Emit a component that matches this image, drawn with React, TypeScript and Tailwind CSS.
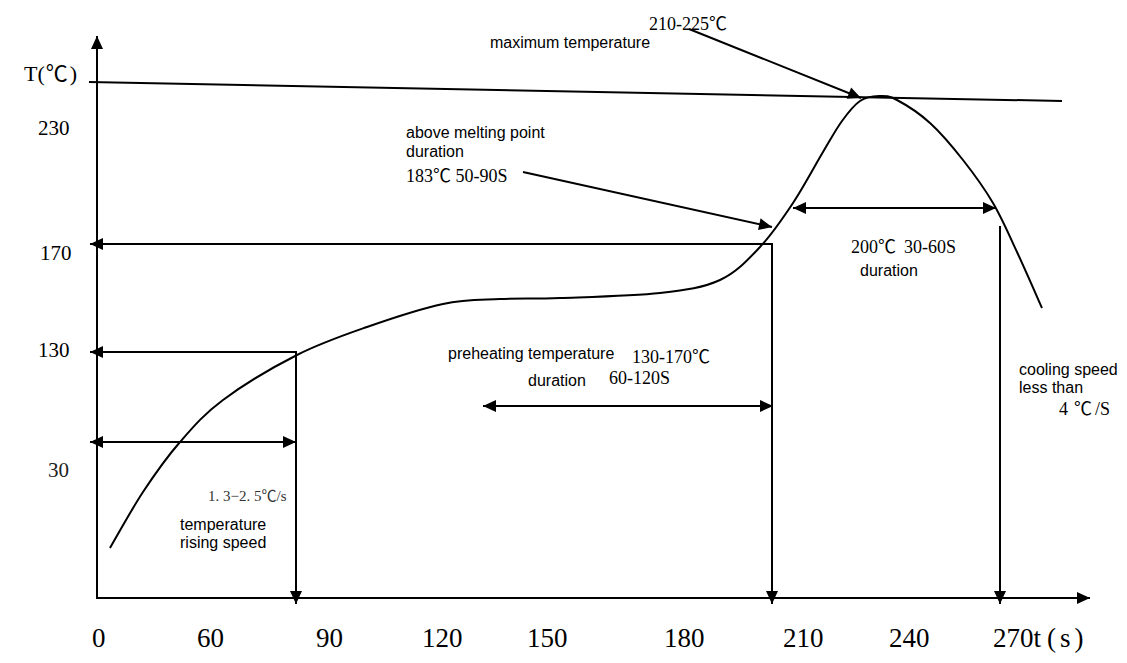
// Reflow soldering temperature profile, drawn as an SVG figure.
type Pt = [number, number];

const serif = "font-['Liberation_Serif','Noto_Sans_CJK_SC',serif]";
const sans = "font-['Liberation_Sans','Noto_Sans_CJK_SC',sans-serif]";

const curve: Pt[] = [
  [110, 548], [143, 492], [180, 442], [223, 400], [297, 355], [367, 327],
  [443, 304], [500, 299], [560, 298], [660, 293], [720, 280], [760, 247],
  [793, 203], [823, 152], [842, 121], [860, 101], [879, 96], [897, 100],
  [930, 123], [963, 160], [993, 203], [1017, 252], [1042, 308],
];

function smoothPath(pts: Pt[]) {
  let d = `M${pts[0][0]},${pts[0][1]}`;
  for (let i = 0; i < pts.length - 1; i++) {
    const p0 = pts[i - 1] ?? pts[i];
    const p1 = pts[i];
    const p2 = pts[i + 1];
    const p3 = pts[i + 2] ?? p2;
    const c1 = [p1[0] + (p2[0] - p0[0]) / 6, p1[1] + (p2[1] - p0[1]) / 6];
    const c2 = [p2[0] - (p3[0] - p1[0]) / 6, p2[1] - (p3[1] - p1[1]) / 6];
    d += ` C${c1[0]},${c1[1]} ${c2[0]},${c2[1]} ${p2[0]},${p2[1]}`;
  }
  return d;
}

function Head({ at, from }: { at: Pt; from: Pt }) {
  const [x, y] = at;
  const a = Math.atan2(y - from[1], x - from[0]);
  const len = 13;
  const half = 6;
  const bx = x - len * Math.cos(a);
  const by = y - len * Math.sin(a);
  const nx = -Math.sin(a) * half;
  const ny = Math.cos(a) * half;
  return <polygon points={`${x},${y} ${bx + nx},${by + ny} ${bx - nx},${by - ny}`} fill="black" />;
}

function Arrow({ from, to, both }: { from: Pt; to: Pt; both?: boolean }) {
  return (
    <g>
      <line x1={from[0]} y1={from[1]} x2={to[0]} y2={to[1]} stroke="black" strokeWidth={2} />
      <Head at={to} from={from} />
      {both && <Head at={from} from={to} />}
    </g>
  );
}

export default function App() {
  const xTicks: [string, number][] = [
    ["0", 92], ["60", 197], ["90", 316], ["120", 422], ["150", 527], ["180", 664], ["210", 783], ["240", 889],
  ];
  return (
    <div className="h-[663px] w-[1127px] overflow-hidden bg-white">
      <svg width="1127" height="663" viewBox="0 0 1127 663" className="block">
        {/* axes */}
        <Arrow from={[97, 599]} to={[97, 36]} />
        <Arrow from={[97, 598]} to={[1090, 598]} />
        <line x1={89} y1={82} x2={1062} y2={101} stroke="black" strokeWidth={2} />

        {/* guide lines */}
        <Arrow from={[772, 244]} to={[90, 244]} />
        <Arrow from={[772, 243]} to={[772, 604]} />
        <Arrow from={[296, 352]} to={[90, 352]} />
        <Arrow from={[296, 351]} to={[296, 604]} />
        <Arrow from={[90, 442]} to={[296, 442]} both />
        <Arrow from={[483, 406]} to={[773, 406]} both />
        <Arrow from={[793, 208]} to={[996, 208]} both />
        <Arrow from={[1000, 226]} to={[1000, 604]} />
        <Arrow from={[523, 172]} to={[772, 227]} />
        <Arrow from={[689, 29]} to={[861, 98]} />

        <path d={smoothPath(curve)} fill="none" stroke="black" strokeWidth={2} />

        {/* y labels */}
        <g className={serif} fill="black">
          <text x={24} y={81} fontSize={22}>T(<tspan dx={1}>℃</tspan><tspan dx={2}>)</tspan></text>
          <text x={38} y={135} fontSize={21}>230</text>
          <text x={40} y={260} fontSize={21}>170</text>
          <text x={38} y={357} fontSize={21}>130</text>
          <text x={48} y={477} fontSize={21} fill="#222">30</text>
        </g>

        {/* x labels */}
        <g className={serif} fill="black" fontSize={27}>
          {xTicks.map(([t, x]) => (
            <text key={t} x={x} y={647}>{t}</text>
          ))}
          <text x={993} y={647}>
            270t<tspan dx={6}>(</tspan>
            <tspan dx={4}>s</tspan>
            <tspan dx={4}>)</tspan>
          </text>
        </g>

        {/* annotations */}
        <g className={sans} fill="black" fontSize={16}>
          <text x={490} y={48}>maximum temperature</text>
          <text x={406} y={138}>above melting point</text>
          <text x={406} y={157}>duration</text>
          <text x={448} y={359}>preheating temperature</text>
          <text x={528} y={386}>duration</text>
          <text x={860} y={276}>duration</text>
          <text x={1019} y={375}>cooling speed</text>
          <text x={1019} y={393}>less than</text>
          <text x={180} y={530}>temperature</text>
          <text x={180} y={548}>rising speed</text>
        </g>
        <g className={serif} fill="black" fontSize={18}>
          <text x={649} y={30}>210-225℃</text>
          <text x={406} y={182}>183℃ 50-90S</text>
          <text x={632} y={363}>130-170℃</text>
          <text x={609} y={384}>60-120S</text>
          <text x={851} y={253}>200℃<tspan dx={8}>30-60S</tspan></text>
          <text x={1059} y={415}>4<tspan dx={6}>℃</tspan><tspan dx={3}>/S</tspan></text>
          <text x={208} y={501} fontSize={15} fill="#333">1. 3−2. 5℃/s</text>
        </g>
      </svg>
    </div>
  );
}
